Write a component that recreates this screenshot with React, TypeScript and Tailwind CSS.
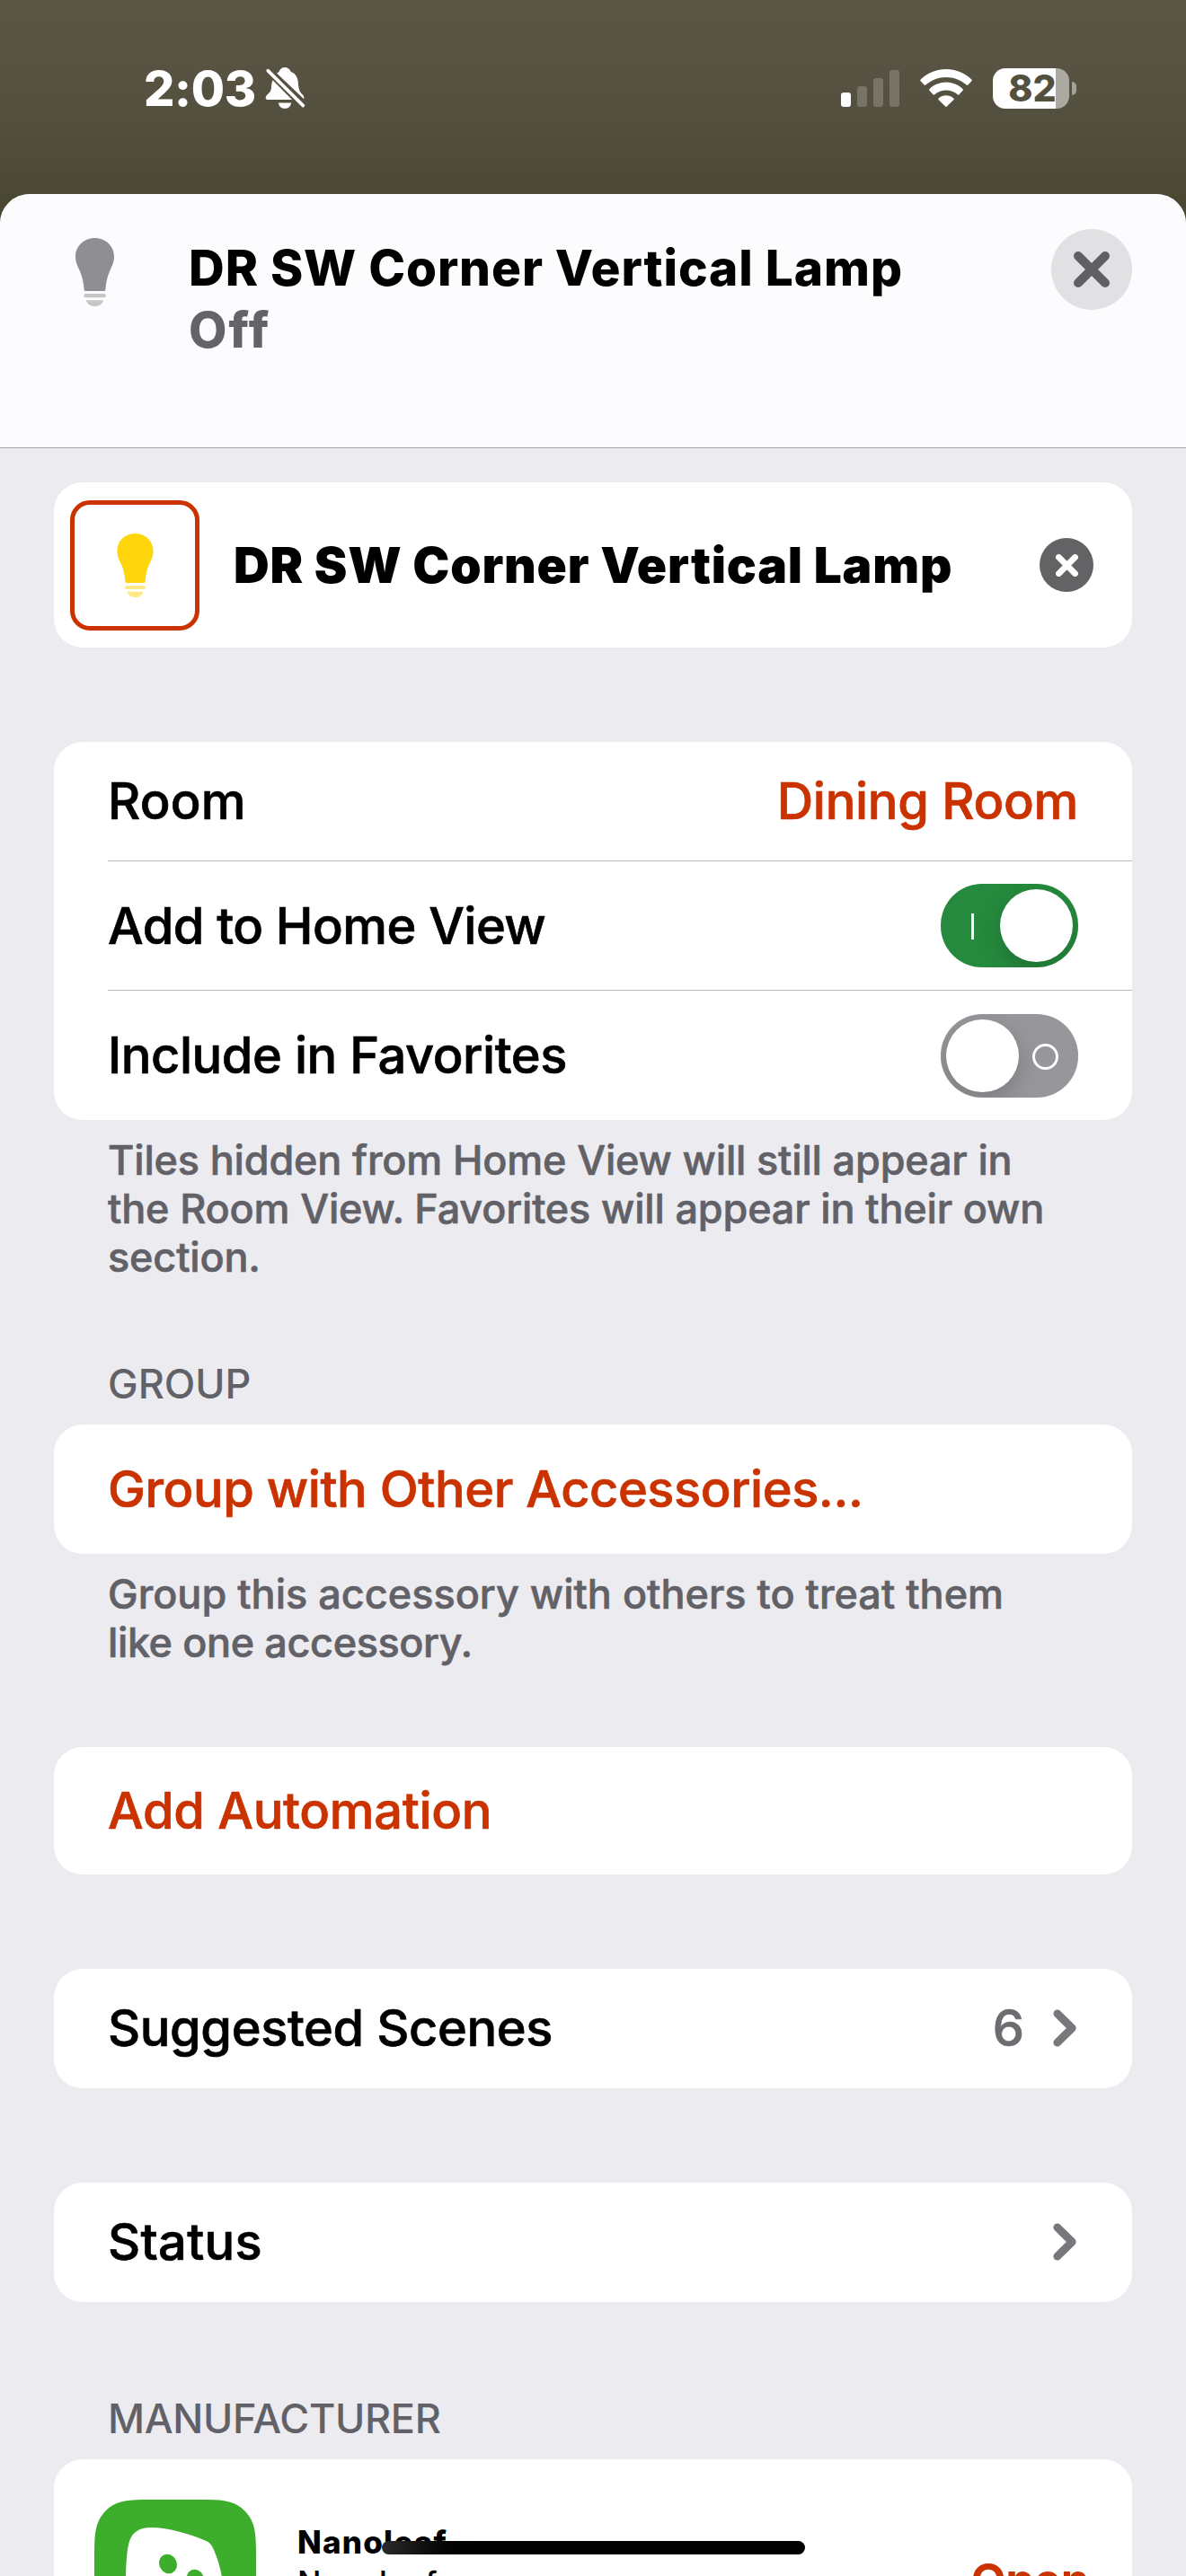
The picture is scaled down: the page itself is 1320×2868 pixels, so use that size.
import type { ReactNode } from 'react'

export default function App() {
  return (
    <div className="w-[1320px] h-[2868px] overflow-hidden relative flex flex-col bg-[#4b4935] font-[Inter,sans-serif]">
      <StatusBar />

      {/* Sheet */}
      <div className="flex-1 min-h-0 -mt-[60px] relative rounded-t-[33px] overflow-hidden bg-[#ebebf0]">
        <header className="h-[283px] flex items-start bg-[#fcfcfe] border-b border-[#a6a6a8]">
          <Bulb className="ml-[84px] mt-[49px] w-[43px] h-[76px] shrink-0" body="#8e8e93" base="#c6c6c8" />
          <div className="ml-[83px] mt-[48px] text-[55px] leading-[69px] font-extrabold">
            <h1 className="tracking-[0.9px] text-black">DR SW Corner Vertical Lamp</h1>
            <p className="tracking-[2px] text-[#636369]">Off</p>
          </div>
          <button className="ml-auto mr-[60px] mt-[39px] size-[90px] rounded-full bg-[#e1e1e3] flex items-center justify-center">
            <Cross className="size-[40px]" color="#5f5f65" width={10} />
          </button>
        </header>

        <main className="px-[60px] pt-[38px]">
          {/* Name */}
          <Card className="h-[184px] flex items-center">
            <div className="ml-[18px] w-[144px] h-[145px] rounded-[22px] border-[5px] border-[#ca3200] flex items-center justify-center">
              <Bulb className="w-[41px] h-[71px]" body="#ffd60c" base="#ffe985" />
            </div>
            <span className="ml-[38px] text-[55px] font-black tracking-[0.8px]">DR SW Corner Vertical Lamp</span>
            <button className="ml-auto mr-[43px] size-[60px] rounded-full bg-[#636366] flex items-center justify-center">
              <Cross className="size-[25px]" color="#ffffff" width={11} />
            </button>
          </Card>

          {/* Room and visibility */}
          <Card className="mt-[105px] pl-[60px]">
            <Row className="h-[132px]">
              <span className="tracking-[0.2px]">Room</span>
              <span className="tracking-[-0.3px] text-[#ca3200]">Dining Room</span>
            </Row>
            <Row className="h-[144px] border-t border-[#b9b9bb]">
              <span className="tracking-[-0.55px]">Add to Home View</span>
              <Toggle on />
            </Row>
            <Row className="h-[145px] border-t border-[#b9b9bb]">
              <span className="tracking-[-0.45px]">Include in Favorites</span>
              <Toggle />
            </Row>
          </Card>
          <Note>
            <span className="tracking-[-0.17px]">
              Tiles hidden from Home View will still appear in
              <br />
              the Room View. Favorites will appear in their own
              <br />
              section.
            </span>
          </Note>

          {/* Group */}
          <Label className="mt-[87px]">GROUP</Label>
          <Card className="mt-[18px] pl-[60px]">
            <Row className="h-[144px] text-[#ca3200]">
              <span className="tracking-[-0.45px]">Group with Other Accessories...</span>
            </Row>
          </Card>
          <Note>
            Group this accessory with others to treat them
            <br />
            <span className="tracking-[-0.4px]">like one accessory.</span>
          </Note>

          <Card className="mt-[89px] pl-[60px]">
            <Row className="h-[142px] text-[#ca3200]">
              <span className="tracking-[-0.3px]">Add Automation</span>
            </Row>
          </Card>

          <Card className="mt-[105px] pl-[60px]">
            <Row className="h-[133px] pb-px">
              <span className="tracking-[-0.4px]">Suggested Scenes</span>
              <span className="flex items-center gap-[32px] text-[#6c6c71]">
                6
                <Chevron />
              </span>
            </Row>
          </Card>

          <Card className="mt-[105px] pl-[60px]">
            <Row className="h-[133px] pb-px">
              <span className="tracking-[0.3px]">Status</span>
              <Chevron />
            </Row>
          </Card>

          {/* Manufacturer */}
          <Label className="mt-[103px] tracking-[-0.3px]">MANUFACTURER</Label>
          <Card className="mt-[18px] h-[270px] px-[45px] pt-[45px] flex items-start">
            <AppIcon />
            <div className="ml-[46px] mt-[25px] text-[35px] leading-[45px]">
              <p className="font-extrabold tracking-[1.2px]">Nanoleaf</p>
              <p className="font-medium tracking-[0.6px]">Nanoleaf</p>
            </div>
            <span className="ml-auto mr-[3px] mt-[59px] text-[51px] leading-[61px] font-bold tracking-[-0.5px] text-[#ca3200]">Open</span>
          </Card>
        </main>
      </div>

      {/* Home indicator */}
      <div className="absolute left-[425px] bottom-[24px] w-[471px] h-[15px] rounded-full bg-linear-to-r from-[#2b2b2b] via-black via-25% to-black" />
    </div>
  )
}

function StatusBar() {
  return (
    <div className="h-[276px] shrink-0 bg-linear-to-b from-[#5c5546] via-[#54503f] via-45% to-[#4a4833] to-80% text-white">
      <div className="h-[196px] pl-[160px] pr-[122px] flex items-center">
        <span className="text-[54px] font-extrabold tracking-[-0.4px]">2:03</span>
        <svg viewBox="0 0 64 64" className="ml-px size-[64px]" fill="currentColor">
          <path d="M22 15.4L24.2 14.2C25.6 10.6 28 8.9 31 8.9C34 8.9 36.4 10.6 37.8 14C43 16 45.4 20 45.8 25.5C46.3 34 48 37 51 39.6Q53 42 52.2 44.2Z" />
          <path d="M17.6 23.3L39 45H12Q9.5 45 9.7 42.5C10.2 39 14.8 38.2 15.8 33C16.2 29 16.3 26 17.6 23.3Z" />
          <path d="M23.8 48.4H38.2C37.6 52.2 35 54.8 31 54.8S24.4 52.2 23.8 48.4Z" />
          <path d="M12.2 12.6L51.4 51.6" stroke="currentColor" strokeWidth="3.6" strokeLinecap="round" />
        </svg>

        <div className="ml-auto flex items-end gap-[7px] h-[41px]">
          <i className="w-[11px] h-[16px] rounded-[3px] bg-white" />
          <i className="w-[11px] h-[23px] rounded-[3px] bg-white/20" />
          <i className="w-[11px] h-[32px] rounded-[3px] bg-white/20" />
          <i className="w-[11px] h-[41px] rounded-[3px] bg-white/20" />
        </div>

        <svg viewBox="0 0 58 42" className="ml-[23px] w-[58px] h-[42px]" fill="currentColor">
          <path d="M0.6 13.2Q-0.2 12.3 0.7 11.4C8.5 4 18.3 0 29 0S49.5 4 57.3 11.4Q58.2 12.3 57.4 13.2L53.4 17.6Q52.6 18.5 51.7 17.6C45.5 12 37.5 8.9 29 8.9S12.5 12 6.3 17.6Q5.4 18.5 4.6 17.6Z" />
          <path d="M10.4 23.8Q9.6 22.9 10.5 22C15.5 17.4 22 14.6 29 14.6S42.5 17.4 47.5 22Q48.4 22.9 47.6 23.8L43.5 28.3Q42.7 29.1 41.8 28.3C38.3 25.2 33.8 23.5 29 23.5S19.7 25.2 16.2 28.3Q15.3 29.1 14.5 28.3Z" />
          <path d="M20.5 34Q19.8 33.2 20.6 32.4C23 30.4 25.8 29.2 29 29.2S35 30.4 37.4 32.4Q38.2 33.2 37.5 34L29.8 41.5Q29 42.3 28.2 41.5Z" />
        </svg>

        <div className="ml-[23px] flex items-center gap-[3px]">
          <div className="w-[85px] h-[45px] pl-[3px] rounded-[14px] bg-linear-to-r from-white from-82% to-[#aba9a0] to-82% flex items-center justify-center">
            <span className="text-[41px] leading-[45px] font-extrabold text-[#54503e]">82</span>
          </div>
          <i className="w-[5px] h-[15px] rounded-r-full bg-[#a3a198]" />
        </div>
      </div>
    </div>
  )
}

function Card({ children, className = '' }: { children: ReactNode; className?: string }) {
  return <section className={`rounded-[32px] bg-white text-black ${className}`}>{children}</section>
}

function Row({ children, className = '' }: { children: ReactNode; className?: string }) {
  return (
    <div className={`pr-[60px] flex items-center justify-between text-[56px] font-medium [-webkit-text-stroke:0.7px] ${className}`}>
      {children}
    </div>
  )
}

function Label({ children, className = '' }: { children: ReactNode; className?: string }) {
  return <h2 className={`pl-[60px] text-[45px] leading-[54px] font-medium text-[#616167] ${className}`}>{children}</h2>
}

function Note({ children }: { children: ReactNode }) {
  return (
    <p className="mt-[18px] pl-[60px] text-[45px] leading-[54px] font-medium [-webkit-text-stroke:0.6px] text-[#616167] whitespace-nowrap">
      {children}
    </p>
  )
}

function Toggle({ on = false }: { on?: boolean }) {
  return (
    <div
      className={`w-[153px] h-[93px] px-[6px] rounded-[46px] overflow-hidden flex items-center justify-between ${
        on ? 'bg-[#258a3d]' : 'bg-[#96969b] flex-row-reverse'
      }`}
    >
      {on ? (
        <i className="ml-[28px] mt-[2px] w-[3px] h-[29px] bg-white" />
      ) : (
        <i className="mr-[16px] mt-[3px] size-[29px] rounded-full border-[3px] border-white" />
      )}
      <i className="size-[81px] rounded-full bg-white shadow-[0_9px_24px_rgba(0,0,0,0.18)]" />
    </div>
  )
}

function Chevron() {
  return (
    <svg viewBox="0 0 26 42" className="mr-[2px] w-[26px] h-[42px]" fill="none">
      <path d="M4.8 4.8L21.2 21L4.8 37.2" stroke="#77777c" strokeWidth="8.8" strokeLinecap="round" strokeLinejoin="round" />
    </svg>
  )
}

function Cross({ className, color, width }: { className: string; color: string; width: number }) {
  const a = width / 2
  const b = 40 - a
  return (
    <svg viewBox="0 0 40 40" className={className} fill="none">
      <path
        d={`M${a} ${a}L${b} ${b}M${b} ${a}L${a} ${b}`}
        stroke={color}
        strokeWidth={width}
        strokeLinecap="round"
      />
    </svg>
  )
}

function Bulb({ className, body, base }: { className: string; body: string; base: string }) {
  return (
    <svg viewBox="0 0 43 76" className={className}>
      <path
        d="M21.5 0C33.5 0 43 9 43 20.5C43 27 40.8 31 38 37C35.2 43.5 33.9 50 33.4 57.5Q33.2 59 31.7 59H11.3Q9.8 59 9.6 57.5C9.1 50 7.8 43.5 5 37C2.2 31 0 27 0 20.5C0 9 9.5 0 21.5 0Z"
        fill={body}
      />
      <rect x="9.2" y="62" width="24.6" height="4.3" rx="2.1" fill={base} />
      <path d="M12 69.3H31C30.5 73 27 76 21.5 76S12.5 73 12 69.3Z" fill={base} />
    </svg>
  )
}

function AppIcon() {
  return (
    <svg viewBox="0 0 180 180" className="size-[180px] shrink-0">
      <path
        d="M0 62C0 40 1 28 8 18C18 4 30 0 54 0H126C150 0 162 4 172 18C179 28 180 40 180 62V118C180 140 179 152 172 162C162 176 150 180 126 180H54C30 180 18 176 8 162C1 152 0 140 0 118Z"
        fill="#3dae2b"
      />
      <path
        d="M35 85C35.5 70 36 58 38.5 48C41.5 36.5 50 31 63 31C82 31 108 38.5 124.5 46C129 48.2 131 51 133 56C137 65 140 75 142 86C145 105 145 125 138 142C110 152 70 152 42 146C36 125 34.5 105 35 85Z"
        fill="#fff"
      />
      <ellipse cx="82" cy="71.5" rx="9.7" ry="11" transform="rotate(-25 82 71.5)" fill="#3dae2b" />
      <ellipse cx="112.5" cy="88.5" rx="9.5" ry="11" transform="rotate(-25 112.5 88.5)" fill="#3dae2b" />
    </svg>
  )
}
